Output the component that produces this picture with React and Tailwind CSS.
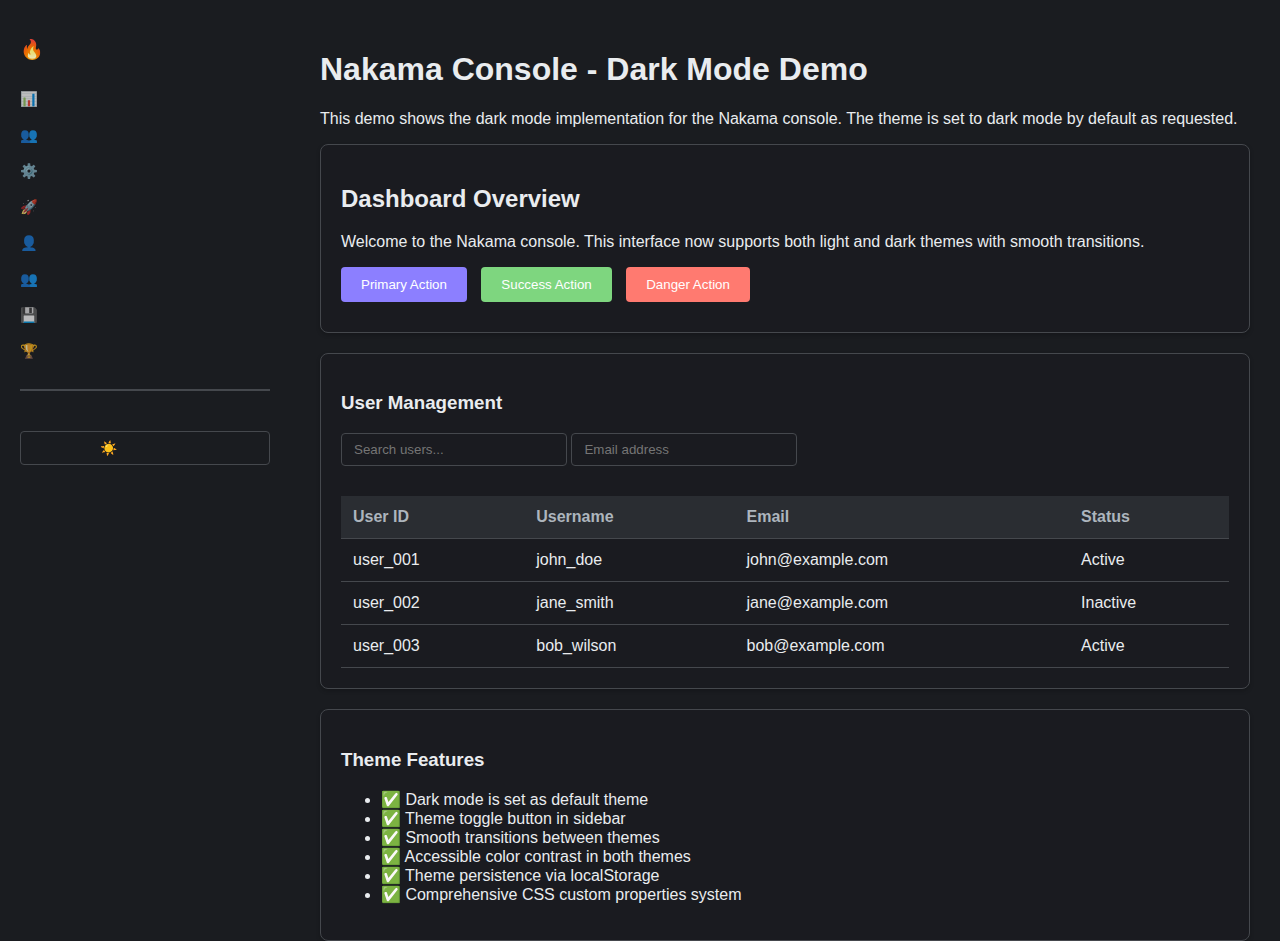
const navIcons = ["📊", "👥", "⚙️", "🚀", "👤", "👥", "💾", "🏆"];

const users = [
  ["user_001", "john_doe", "john@example.com", "Active"],
  ["user_002", "jane_smith", "jane@example.com", "Inactive"],
  ["user_003", "bob_wilson", "bob@example.com", "Active"],
];

const features = [
  "Dark mode is set as default theme",
  "Theme toggle button in sidebar",
  "Smooth transitions between themes",
  "Accessible color contrast in both themes",
  "Theme persistence via localStorage",
  "Comprehensive CSS custom properties system",
];

const actions = [
  ["Primary Action", "bg-[#8c7fff]"],
  ["Success Action", "bg-[#7ed67f]"],
  ["Danger Action", "bg-[#ff7a70]"],
];

const cardClass =
  "mb-5 rounded-lg border border-[#45484d] bg-[#1a1b20] p-5 shadow-[0_2px_4px_rgba(0,0,0,0.2)]";
const inputClass =
  "h-[33px] w-[226px] rounded border border-[#45484d] bg-[#1a1b20] px-3 text-[13.3333px] text-[#e9ecef] placeholder:text-[#757575]";

function Sidebar() {
  return (
    <aside className="w-[290px] shrink-0 px-5 pt-[38px]">
      <div className="h-6 text-[19.2px] leading-6 opacity-90">🔥</div>
      <nav className="mt-5 flex flex-col">
        {navIcons.map((icon, i) => (
          <div key={i} className="flex h-9 items-center text-[14.4px] opacity-70">
            {icon}
          </div>
        ))}
      </nav>
      <hr className="mt-[19px] border-t-2 border-[#45484d]" />
      <button
        type="button"
        className="mt-10 block h-[34px] w-full rounded border border-[#45484d] pl-[79px] text-left text-sm"
      >
        ☀️
      </button>
    </aside>
  );
}

function App() {
  return (
    <div className="flex min-h-screen bg-[#1a1c20] font-['Liberation_Sans','Noto_Color_Emoji',sans-serif] text-[#e9ecef]">
      <Sidebar />
      <main className="min-w-0 flex-1 px-[30px] pt-[30px]">
        <h1 className="my-[21.44px] text-[32px] font-bold leading-[37px]">
          Nakama Console - Dark Mode Demo
        </h1>
        <p className="mb-4 text-base leading-[18px]">
          This demo shows the dark mode implementation for the Nakama console. The theme is set to dark mode by default as requested.
        </p>

        <section className={cardClass}>
          <h2 className="my-[19.92px] text-2xl font-bold leading-[28px]">Dashboard Overview</h2>
          <p className="mb-4 text-base leading-[18px]">
            Welcome to the Nakama console. This interface now supports both light and dark themes with smooth transitions.
          </p>
          <div className="mb-2.5 flex gap-[14.45px]">
            {actions.map(([label, bg]) => (
              <button
                key={label}
                type="button"
                className={`h-[35px] rounded px-5 pt-px text-[13.3333px] text-white ${bg}`}
              >
                {label}
              </button>
            ))}
          </div>
        </section>

        <section className={cardClass}>
          <h3 className="my-[18.72px] text-[18.72px] font-bold leading-[22px]">User Management</h3>
          <div className="flex gap-[4.45px]">
            <input className={inputClass} placeholder="Search users..." />
            <input className={inputClass} placeholder="Email address" />
          </div>
          <table className="mt-[30px] w-full border-collapse text-base">
            <thead>
              <tr className="border-b border-[#45484d] bg-[#2a2d32] text-left text-[#adb5bd]">
                {["User ID", "Username", "Email", "Status"].map((h) => (
                  <th key={h} className="h-[42px] px-3 font-bold">{h}</th>
                ))}
              </tr>
            </thead>
            <tbody>
              {users.map((row) => (
                <tr key={row[0]} className="border-b border-[#45484d]">
                  {row.map((cell) => (
                    <td key={cell} className="h-[43px] px-3">{cell}</td>
                  ))}
                </tr>
              ))}
            </tbody>
          </table>
        </section>

        <section className={cardClass}>
          <h3 className="mb-[18.72px] mt-[19.72px] text-[18.72px] font-bold leading-[22px]">Theme Features</h3>
          <ul className="mb-4 list-disc pl-10 text-base leading-[19px]">
            {features.map((f) => (
              <li key={f}>✅ {f}</li>
            ))}
          </ul>
        </section>
      </main>
    </div>
  );
}

export default App;
